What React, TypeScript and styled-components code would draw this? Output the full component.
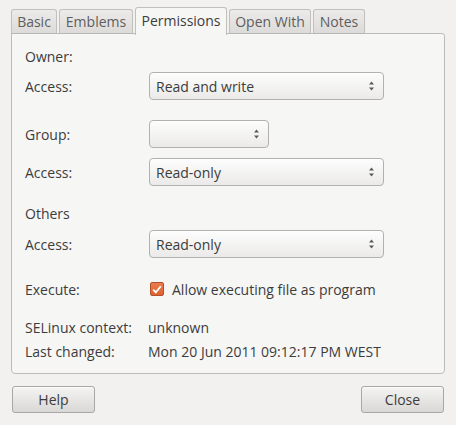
import styled, { createGlobalStyle } from 'styled-components'

const Global = createGlobalStyle`
  html, body {
    margin: 0;
    background: #f2f1f0;
  }
  body {
    font-family: "Open Sans", "DejaVu Sans", sans-serif;
    font-size: 14px;
    color: #3c3c3c;
  }
`

const Window = styled.div`
  width: 456px;
  height: 425px;
  box-sizing: border-box;
  padding: 7px 11px 0 11px;
  display: flex;
  flex-direction: column;
`

const TabBar = styled.div`
  display: flex;
  align-items: flex-end;
  gap: 2px;
  height: 27px;
  position: relative;
  z-index: 1;
  margin-bottom: -1px;
`

const Tab = styled.div<{ $active?: boolean; $w: number }>`
  width: ${(p) => p.$w}px;
  box-sizing: border-box;
  height: ${(p) => (p.$active ? 28 : 25)}px;
  display: flex;
  align-items: center;
  justify-content: center;
  border: 1px solid #c2c0bd;
  border-bottom: ${(p) => (p.$active ? 'none' : '1px solid #b8b6b3')};
  border-radius: 3px 3px 0 0;
  background: ${(p) =>
    p.$active ? '#f6f6f5' : 'linear-gradient(#ecebea, #dcdbd9)'};
  color: ${(p) => (p.$active ? '#3c3c3c' : '#5e5e5e')};
  padding-bottom: ${(p) => (p.$active ? 2 : 0)}px;
  margin-bottom: ${(p) => (p.$active ? -1 : 0)}px;
  white-space: nowrap;
`

const Panel = styled.div`
  height: 341px;
  box-sizing: border-box;
  border: 1px solid #bdbbb8;
  border-radius: 0 3px 4px 4px;
  background: #f6f6f5;
  padding: 13px 13px 0 13px;
  display: flex;
  flex-direction: column;
`

const Row = styled.div<{ $top?: number; $h?: number }>`
  display: flex;
  align-items: center;
  height: ${(p) => p.$h ?? 18}px;
  margin-top: ${(p) => p.$top ?? 0}px;
`

const Label = styled.div`
  width: 124px;
  flex: none;
  white-space: nowrap;
`

const Heading = styled.div`
  white-space: nowrap;
`

const Value = styled.div`
  white-space: nowrap;
  margin-left: -1px;
`

const Combo = styled.div<{ $w: number }>`
  width: ${(p) => p.$w}px;
  height: 28px;
  box-sizing: border-box;
  border: 1px solid #b3b1ae;
  border-radius: 4px;
  background: linear-gradient(#fdfdfd, #ebeae9);
  box-shadow: inset 0 1px 0 #ffffff;
  display: flex;
  align-items: center;
  justify-content: space-between;
  padding: 0 8px 0 6px;
  color: #3c3c3c;
`

const Check = styled.div`
  width: 14px;
  height: 14px;
  box-sizing: border-box;
  border: 1px solid #b1502a;
  border-radius: 2px;
  background: linear-gradient(#eb7d4e, #dd6131);
  display: flex;
  align-items: center;
  justify-content: center;
  margin: 0 8px 0 1px;
`

const Footer = styled.div`
  display: flex;
  justify-content: space-between;
  margin-top: 12px;
  padding: 0 1px;
`

const Button = styled.div`
  width: 83px;
  height: 27px;
  box-sizing: border-box;
  border: 1px solid #a9a7a4;
  border-radius: 3px;
  background: linear-gradient(#f4f4f3, #d9d8d6);
  box-shadow: inset 0 1px 0 #fbfbfb;
  display: flex;
  align-items: center;
  justify-content: center;
  color: #3c3c3c;
`

function Arrows() {
  return (
    <svg width="7" height="12" viewBox="0 0 7 12">
      <path d="M3.5 1.5 L6 4.5 L1 4.5 Z" fill="#5a5a5a" />
      <path d="M3.5 10.5 L6 7.5 L1 7.5 Z" fill="#5a5a5a" />
    </svg>
  )
}

function Select({ w, value }: { w: number; value?: string }) {
  return (
    <Combo $w={w}>
      <span>{value}</span>
      <Arrows />
    </Combo>
  )
}

export default function App() {
  return (
    <>
      <Global />
      <Window>
        <TabBar>
          <Tab $w={46}>Basic</Tab>
          <Tab $w={74}>Emblems</Tab>
          <Tab $w={92} $active>
            Permissions
          </Tab>
          <Tab $w={82}>Open With</Tab>
          <Tab $w={52}>Notes</Tab>
        </TabBar>
        <Panel>
          <Row>
            <Heading>Owner:</Heading>
          </Row>
          <Row $top={7} $h={28}>
            <Label>Access:</Label>
            <Select w={235} value="Read and write" />
          </Row>

          <Row $top={20} $h={28}>
            <Label>Group:</Label>
            <Select w={120} />
          </Row>
          <Row $top={10} $h={28}>
            <Label>Access:</Label>
            <Select w={235} value="Read-only" />
          </Row>

          <Row $top={18}>
            <Heading>Others</Heading>
          </Row>
          <Row $top={8} $h={28}>
            <Label>Access:</Label>
            <Select w={235} value="Read-only" />
          </Row>

          <Row $top={22}>
            <Label>Execute:</Label>
            <Check>
              <svg width="10" height="9" viewBox="0 0 10 9">
                <path
                  d="M1.2 4.6 L3.8 7.4 L8.8 1.2"
                  fill="none"
                  stroke="#ffffff"
                  strokeWidth="1.8"
                />
              </svg>
            </Check>
            <span>Allow executing file as program</span>
          </Row>

          <Row $top={20}>
            <Label>SELinux context:</Label>
            <Value>unknown</Value>
          </Row>
          <Row $top={6}>
            <Label>Last changed:</Label>
            <Value>Mon 20 Jun 2011 09:12:17 PM WEST</Value>
          </Row>
        </Panel>
        <Footer>
          <Button>Help</Button>
          <Button>Close</Button>
        </Footer>
      </Window>
    </>
  )
}
